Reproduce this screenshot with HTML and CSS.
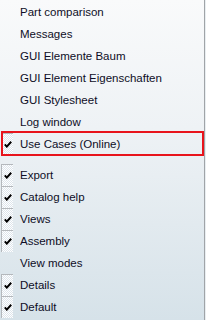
FILE: index.html
```html
<!DOCTYPE html>
<html>
<head>
<meta charset="utf-8">
<link rel="stylesheet" href="styles.css">
</head>
<body>
<div class="menu">
  <div class="group">
    <div class="item"><span class="gutter"></span><span class="label">Part comparison</span></div>
    <div class="item"><span class="gutter"></span><span class="label">Messages</span></div>
    <div class="item"><span class="gutter"></span><span class="label">GUI Elemente Baum</span></div>
    <div class="item"><span class="gutter"></span><span class="label">GUI Element Eigenschaften</span></div>
    <div class="item"><span class="gutter"></span><span class="label">GUI Stylesheet</span></div>
    <div class="item"><span class="gutter"></span><span class="label">Log window</span></div>
    <div class="item highlighted"><span class="gutter checked"><svg class="tick" viewBox="0 0 8 7" width="8" height="7"><path d="M0.8 3.4 L2.8 5.6 L7.2 0.8" /></svg></span><span class="label">Use Cases (Online)</span></div>
  </div>
  <div class="separator"></div>
  <div class="group">
    <div class="item"><span class="gutter checked"><svg class="tick" viewBox="0 0 8 7" width="8" height="7"><path d="M0.8 3.4 L2.8 5.6 L7.2 0.8" /></svg></span><span class="label">Export</span></div>
    <div class="item"><span class="gutter checked"><svg class="tick" viewBox="0 0 8 7" width="8" height="7"><path d="M0.8 3.4 L2.8 5.6 L7.2 0.8" /></svg></span><span class="label">Catalog help</span></div>
    <div class="item"><span class="gutter checked"><svg class="tick" viewBox="0 0 8 7" width="8" height="7"><path d="M0.8 3.4 L2.8 5.6 L7.2 0.8" /></svg></span><span class="label">Views</span></div>
    <div class="item"><span class="gutter checked"><svg class="tick" viewBox="0 0 8 7" width="8" height="7"><path d="M0.8 3.4 L2.8 5.6 L7.2 0.8" /></svg></span><span class="label">Assembly</span></div>
    <div class="item"><span class="gutter"></span><span class="label">View modes</span></div>
    <div class="item"><span class="gutter checked"><svg class="tick" viewBox="0 0 8 7" width="8" height="7"><path d="M0.8 3.4 L2.8 5.6 L7.2 0.8" /></svg></span><span class="label">Details</span></div>
    <div class="item"><span class="gutter checked"><svg class="tick" viewBox="0 0 8 7" width="8" height="7"><path d="M0.8 3.4 L2.8 5.6 L7.2 0.8" /></svg></span><span class="label">Default</span></div>
  </div>
</div>
</body>
</html>
```

FILE: styles.css
```css
html, body {
  margin: 0;
  padding: 0;
  width: 206px;
  height: 320px;
  overflow: hidden;
  background: #e9eef1;
}

.menu {
  width: 205px;
  height: 320px;
  box-sizing: border-box;
  border-right: 1px solid #a0a4a8;
  background: linear-gradient(to bottom, #f9fafb 0%, #eef2f5 40%, #d6e2e9 100%);
  padding-top: 1px;
  font-family: "Liberation Sans", Arial, sans-serif;
  font-size: 11.5px;
  color: #0e0e26;
  display: flex;
  flex-direction: column;
}

.group {
  display: flex;
  flex-direction: column;
}

.item {
  position: relative;
  height: 22px;
  display: flex;
  align-items: center;
}

.gutter {
  width: 12px;
  height: 22px;
  margin-left: 1px;
  margin-right: 7px;
  box-sizing: border-box;
  display: flex;
  align-items: center;
  justify-content: center;
}

.gutter.checked {
  border-left: 1px solid #b4b8bc;
  border-top: 1px solid #b4b8bc;
  background-color: #ffffff;
  background-image: repeating-conic-gradient(#dde5ec 0% 25%, #ffffff 0% 50%);
  background-size: 2px 2px;
}

.tick {
  display: block;
  margin-left: 1px;
}

.tick path {
  fill: none;
  stroke: #000000;
  stroke-width: 2;
}

.label {
  white-space: nowrap;
}

.highlighted::after {
  content: "";
  position: absolute;
  left: 1px;
  right: 0;
  top: -2px;
  bottom: -1px;
  border: 2px solid #e8141c;
  pointer-events: none;
}

.separator {
  height: 9px;
}
```
